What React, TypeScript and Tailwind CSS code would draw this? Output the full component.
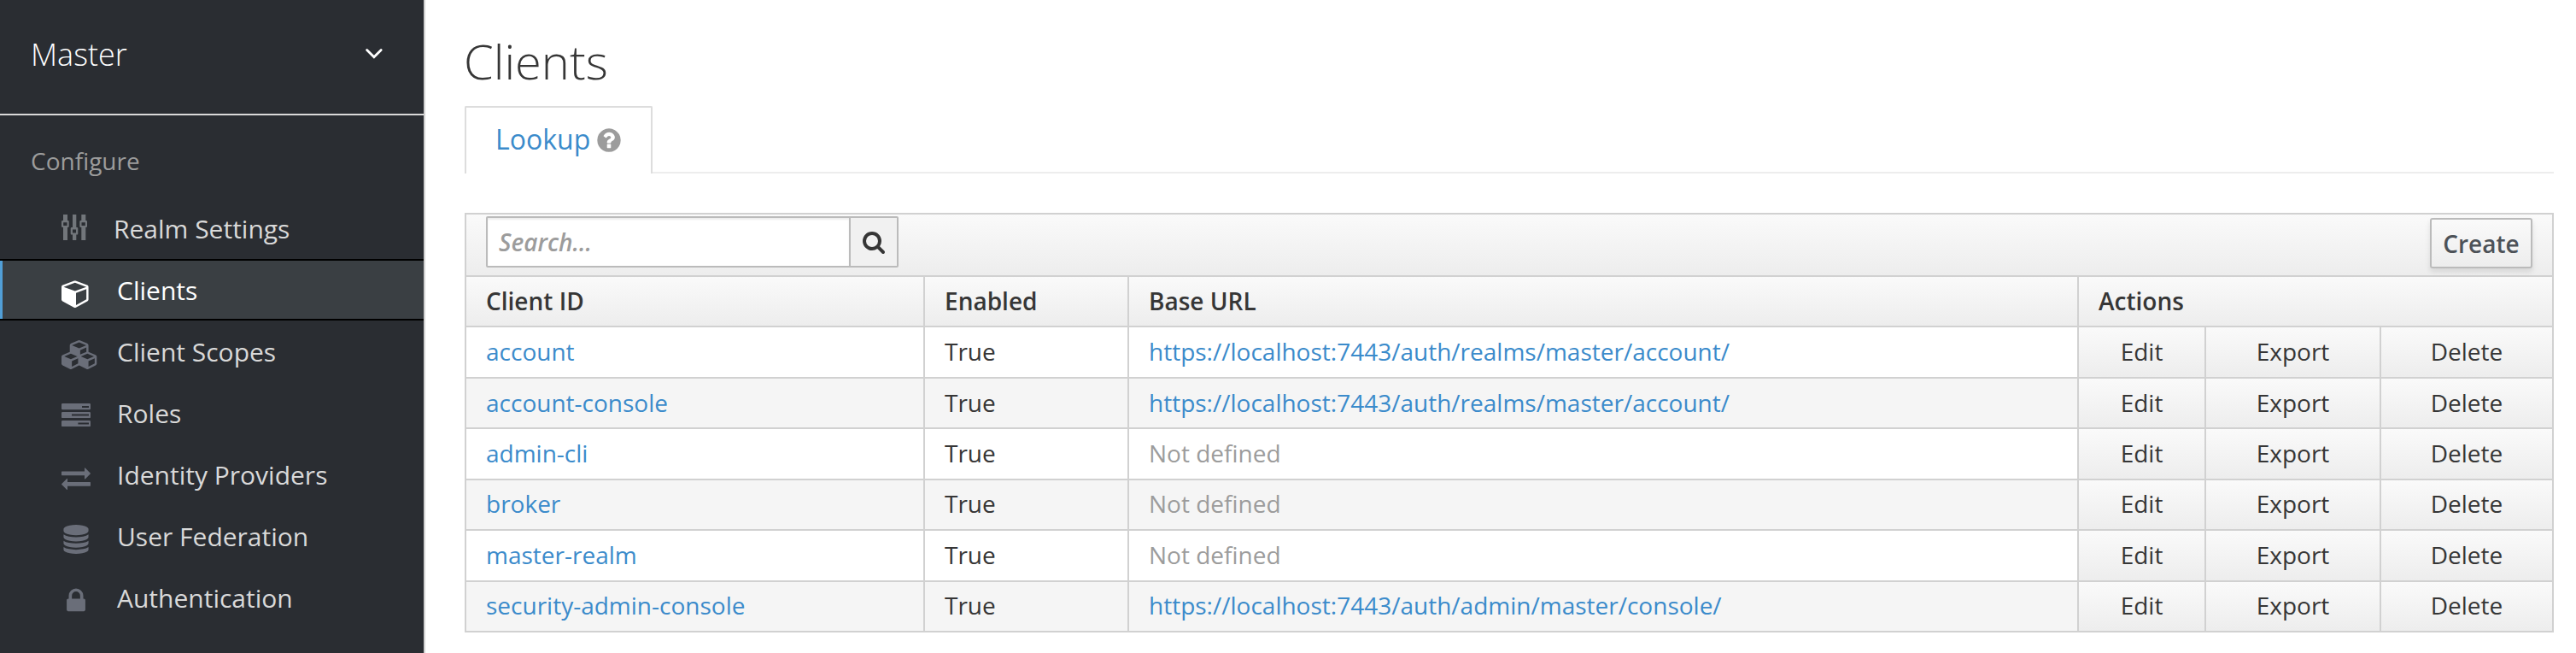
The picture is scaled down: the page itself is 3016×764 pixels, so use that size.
import React from "react";

type IconProps = { className?: string };

const Sliders = () => (
  <svg viewBox="0 0 30 30" className="relative -top-[3px] h-[30px] w-[30px]" fill="#72767b" fillRule="evenodd">
    <path d="M2 0h5v7h.5q1.2 0 1.2 1.2v5.6q0 1.2-1.2 1.2H7v15H2V15h-.6Q0 15 0 13.8V8.200Q0 7 1.400 7H2zM2.200 9.200v3.800h4.300V9.200z" />
    <path d="M13 0h4.300v15h.7q1.300 0 1.300 1.200v6.200q0 1.200-1.300 1.200h-.7V30H13v-6.400h-1q-1.300 0-1.300-1.200v-6.200q0-1.200 1.300-1.200h1zM13 17.500v4h4v-4z" />
    <path d="M23.300 0h5v7h.4Q30 7 30 8.200v5.600q0 1.200-1.300 1.200h-.4v15h-5V15h-.7q-1.300 0-1.300-1.200V8.200q0-1.200 1.300-1.200h.7zM23.500 9.200v3.800h4.300V9.200z" />
  </svg>
);

const Cube = () => (
  <svg viewBox="0 0 1792 1792" className="h-[34px] w-[34px]" fill="#ffffff">
    <path d="M896 1629l640-349v-636l-640 233v752zm-64-865l698-254-698-254-698 254zm832-252v768q0 35-18 65t-49 47l-704 384q-28 16-61 16t-61-16l-704-384q-31-17-49-47t-18-65v-768q0-40 23-73t61-47l704-256q22-8 44-8t44 8l704 256q38 14 61 47t23 73z" />
  </svg>
);

const Cubes = () => (
  <svg viewBox="0 0 2304 1792" className="h-[34px] w-[44px] shrink-0" preserveAspectRatio="xMinYMin meet" fill="#6a6e79">
    <path d="M640 1632l384-192v-314l-384 164v342zm-64-454l404-173-404-173-404 173zm1088 454l384-192v-314l-384 164v342zm-64-454l404-173-404-173-404 173zm-448-293l384-165v-266l-384 164v267zm-64-379l441-189-441-189-441 189zm1088 518v416q0 36-19 67t-52 47l-448 224q-25 14-57 14t-57-14l-448-224q-5-2-7-4-2 2-7 4l-448 224q-25 14-57 14t-57-14l-448-224q-33-16-52-47t-19-67v-416q0-38 21.5-70t56.500-48l434-186v-400q0-38 21.500-70t56.500-48l448-192q23-10 50-10t50 10l448 192q35 16 56.500 48t21.500 70v400l434 186q36 16 57 48t21 70z" />
  </svg>
);

const Tasks = () => (
  <svg viewBox="0 0 34 34" className="h-[34px] w-[34px]" fill="#6a6e79" fillRule="evenodd">
    <path d="M1.200 2h31.600q1.200 0 1.200 1.200v4.900q0 1.200-1.200 1.200H1.200Q0 9.300 0 8.100V3.200Q0 2 1.200 2zM24 5v2h8V5z" />
    <path d="M1.200 12h31.600q1.200 0 1.200 1.200v4.700q0 1.200-1.200 1.200H1.200Q0 19.100 0 17.900v-4.700Q0 12 1.200 12zM12 14.600v2h20v-2z" />
    <path d="M1.200 22h31.600q1.200 0 1.200 1.200v4.700q0 1.200-1.200 1.200H1.200Q0 29.100 0 27.900v-4.700Q0 22 1.200 22zM19.400 24.400v2H32v-2z" />
  </svg>
);

const Exchange = () => (
  <svg viewBox="0 0 34 34" className="h-[34px] w-[34px]" fill="#6a6e79">
    <path d="M.6 9.500H27V5.800q0-.9.700-.3l6 6q.5.500 0 1l-6 5.900q-.7.500-.7-.3v-3.900H.6q-.6 0-.6-.6V10.100q0-.6.6-.6z" />
    <path d="M33.400 22H7v-3.700q0-.9-.7-.3l-6 6q-.5.500 0 1l6 5.900q.7.500.7-.3v-3.900h26.400q.6 0 .6-.6v-3.500q0-.6-.6-.6z" />
  </svg>
);

const Database = () => (
  <svg viewBox="0 0 1792 1792" className="h-[34px] w-[34px]" fill="#6a6e79">
    <path d="M896 768q237 0 443-43t325-127v170q0 69-103 128t-280 93.500-385 34.500-385-34.500-280-93.500-103-128v-170q119 84 325 127t443 43zm0 768q237 0 443-43t325-127v170q0 69-103 128t-280 93.500-385 34.500-385-34.500-280-93.500-103-128v-170q119 84 325 127t443 43zm0-384q237 0 443-43t325-127v170q0 69-103 128t-280 93.500-385 34.500-385-34.500-280-93.500-103-128v-170q119 84 325 127t443 43zm0-1152q208 0 385 34.500t280 93.500 103 128v128q0 69-103 128t-280 93.500-385 34.500-385-34.500-280-93.500-103-128v-128q0-69 103-128t280-93.500 385-34.500z" />
  </svg>
);

const Lock = () => (
  <svg viewBox="0 0 1792 1792" className="h-[34px] w-[34px]" fill="#6a6e79">
    <path d="M640 768h512v-192q0-106-75-181t-181-75-181 75-75 181v192zm832 96v576q0 40-28 68t-68 28h-960q-40 0-68-28t-28-68v-576q0-40 28-68t68-28h32v-192q0-184 132-316t316-132 316 132 132 316v192h32q40 0 68 28t28 68z" />
  </svg>
);

const Help = ({ className }: IconProps) => (
  <svg viewBox="0 0 1792 1792" className={className} fill="#9c9c9c">
    <path d="M1024 1376v-192q0-14-9-23t-23-9h-192q-14 0-23 9t-9 23v192q0 14 9 23t23 9h192q14 0 23-9t9-23zm256-672q0-88-55.500-163t-138.500-116-170-41q-243 0-371 213-15 24 8 42l132 100q7 6 19 6 16 0 25-12 53-68 86-92 34-24 86-24 48 0 85.500 26t37.500 59q0 38-20 61t-68 45q-63 28-115.500 86.500t-52.500 125.500v36q0 14 9 23t23 9h192q14 0 23-9t9-23q0-19 21.500-49.500t54.500-49.500q32-18 49-28.500t46-35 44.500-48 28-60.500 12.500-81zm384 192q0 209-103 385.500t-279.500 279.500-385.500 103-385.500-103-279.500-279.500-103-385.500 103-385.500 279.500-279.500 385.500-103 385.500 103 279.500 279.500 103 385.500z" />
  </svg>
);

const Magnifier = ({ className }: IconProps) => (
  <svg viewBox="0 0 1792 1792" className={className} fill="#363636">
    <path d="M1216 832q0-185-131.500-316.500t-316.500-131.500-316.500 131.500-131.500 316.500 131.500 316.500 316.500 131.500 316.500-131.500 131.500-316.500zm512 832q0 52-38 90t-90 38q-54 0-90-38l-343-342q-179 124-399 124-143 0-273.500-55.500t-225-150-150-225-55.500-273.500 55.500-273.500 150-225 225-150 273.500-55.500 273.500 55.500 225 150 150 225 55.500 273.500q0 220-124 399l343 343q37 37 37 90z" />
  </svg>
);

const navItems = [
  { label: "Realm Settings", icon: <Sliders />, textStart: "pl-[61px]" },
  { label: "Clients", icon: <Cube />, active: true },
  { label: "Client Scopes", icon: <Cubes /> },
  { label: "Roles", icon: <Tasks /> },
  { label: "Identity Providers", icon: <Exchange /> },
  { label: "User Federation", icon: <Database /> },
  { label: "Authentication", icon: <Lock /> },
];

const clients = [
  { id: "account", url: "https://localhost:7443/auth/realms/master/account/", row: "h-[60px] bg-white leading-[57px]" },
  { id: "account-console", url: "https://localhost:7443/auth/realms/master/account/", row: "h-[59px] bg-[#f5f5f5] leading-[57px]" },
  { id: "admin-cli", row: "h-[60px] bg-white leading-[57px]" },
  { id: "broker", row: "h-[59px] bg-[#f5f5f5] leading-[55px]" },
  { id: "master-realm", row: "h-[60px] bg-white leading-[57px]" },
  { id: "security-admin-console", url: "https://localhost:7443/auth/admin/master/console/", row: "h-[59px] bg-[#f5f5f5] leading-[55px]" },
];

const COLS = "grid grid-cols-[537px_239px_1112px_149px_205px_200px]";
const SHADE = "bg-linear-to-b from-[#fafafa] to-[#ededed]";
const CELL = "border-r-2 border-[#d1d1d1] pl-[23px]";

function Sidebar() {
  return (
    <aside className="flex w-[498px] shrink-0 flex-col border-r-2 border-[#d1d1d1] bg-[#2a2d32]">
      <div className="flex h-[135px] items-start justify-between border-b-2 border-[#d9d9d9] pt-[34px] pr-[46px] pl-[36px]">
        <span className="text-[36px] leading-[60px] font-light text-white">Master</span>
        <svg viewBox="0 0 24 16" className="mt-[21px] h-4 w-6" fill="none" stroke="#fff" strokeWidth="2.800" strokeLinecap="round">
          <path d="M3.600 3.400l8.300 8.300 8.300-8.300" />
        </svg>
      </div>
      <div className="h-24 pt-[28px] pl-9 text-[28px] leading-[50px] text-[#9c9c9c]">Configure</div>
      <nav>
        {navItems.map((item) => (
          <a
            key={item.label}
            className={
              item.active
                ? "flex h-[72px] border-y-2 border-black bg-[#3a3f43] text-white shadow-[inset_3px_0_0_#519fd7]"
                : "flex h-[72px] border-y-2 border-transparent text-[#d9d9d9]"
            }
          >
            <span className="ml-[72px] flex w-0 pt-[21px]">
              <span className="w-[44px] shrink-0">{item.icon}</span>
            </span>
            <span className={`${item.textStart ?? "pl-[65px]"} text-[30px] leading-[70px]`}>{item.label}</span>
          </a>
        ))}
      </nav>
    </aside>
  );
}

function Toolbar() {
  return (
    <div className={`flex h-[73px] justify-between border-b-2 border-[#d1d1d1] pr-[23px] pl-[23px] ${SHADE}`}>
      <div className="mt-[2px] flex h-[60px] w-[483px] rounded-[2px] border-2 border-[#bbbbbb] bg-white">
        <div className="flex-1 pl-[13px] text-[28px] leading-[56px] font-semibold text-[#9c9c9c] italic shadow-[inset_0_2px_2px_rgba(3,3,3,0.075)]">
          Search...
        </div>
        <div className="flex w-[56px] items-center justify-center border-l-2 border-[#bbbbbb] bg-[#f1f1f1]">
          <Magnifier className="h-7 w-7" />
        </div>
      </div>
      <button className={`mt-1 h-[59px] w-[120px] rounded-[3px] border-2 border-[#bbbbbb] pt-[2px] text-[28px] leading-[53px] font-semibold text-[#4d5258] shadow-[0_4px_6px_rgba(3,3,3,0.1)] ${SHADE}`}>
        Create
      </button>
    </div>
  );
}

function ClientTable() {
  return (
    <section className="mt-[46px] w-[2446px] border-x-2 border-t-2 border-[#d1d1d1] text-[28px] text-[#363636]">
      <Toolbar />
      <div className={`${COLS} h-[59px] border-b-2 border-[#d1d1d1] leading-[56px] font-semibold`}>
        <div className={`${CELL} ${SHADE}`}>Client ID</div>
        <div className={`${CELL} ${SHADE}`}>Enabled</div>
        <div className={`${CELL} ${SHADE}`}>Base URL</div>
        <div className={`col-span-3 pl-[23px] ${SHADE}`}>Actions</div>
      </div>
      {clients.map((c) => (
        <div key={c.id} className={`${COLS} border-b-2 border-[#d1d1d1] ${c.row}`}>
          <div className={`${CELL} text-[#3b8bcb]`}>{c.id}</div>
          <div className={CELL}>True</div>
          <div className={`${CELL} ${c.url ? "text-[#3b8bcb]" : "text-[#9c9c9c]"}`}>{c.url ?? "Not defined"}</div>
          <div className={`border-r-2 border-[#d1d1d1] text-center ${SHADE}`}>Edit</div>
          <div className={`border-r-2 border-[#d1d1d1] text-center ${SHADE}`}>Export</div>
          <div className={`text-center ${SHADE}`}>Delete</div>
        </div>
      ))}
    </section>
  );
}

export default function App() {
  return (
    <div className="flex h-[764px] w-[3016px] overflow-hidden bg-white font-['Open_Sans',sans-serif]">
      <Sidebar />
      <main className="flex flex-col pl-[46px]">
        <h1 className="-ml-px h-[124px] pt-[33px] text-[56px] leading-[76px] font-light text-[#363636]">Clients</h1>
        <div className="flex h-[79px] w-[2446px]">
          <div className="flex w-[220px] rounded-t-[2px] border-x-2 border-t-2 border-[#dddddd] pl-[34px] text-[32px] leading-[74px] text-[#3b8bcb]">
            Lookup
            <Help className="mt-[22px] ml-[6px] h-8 w-8" />
          </div>
          <div className="flex-1 border-b-2 border-[#ededed]" />
        </div>
        <ClientTable />
      </main>
    </div>
  );
}
